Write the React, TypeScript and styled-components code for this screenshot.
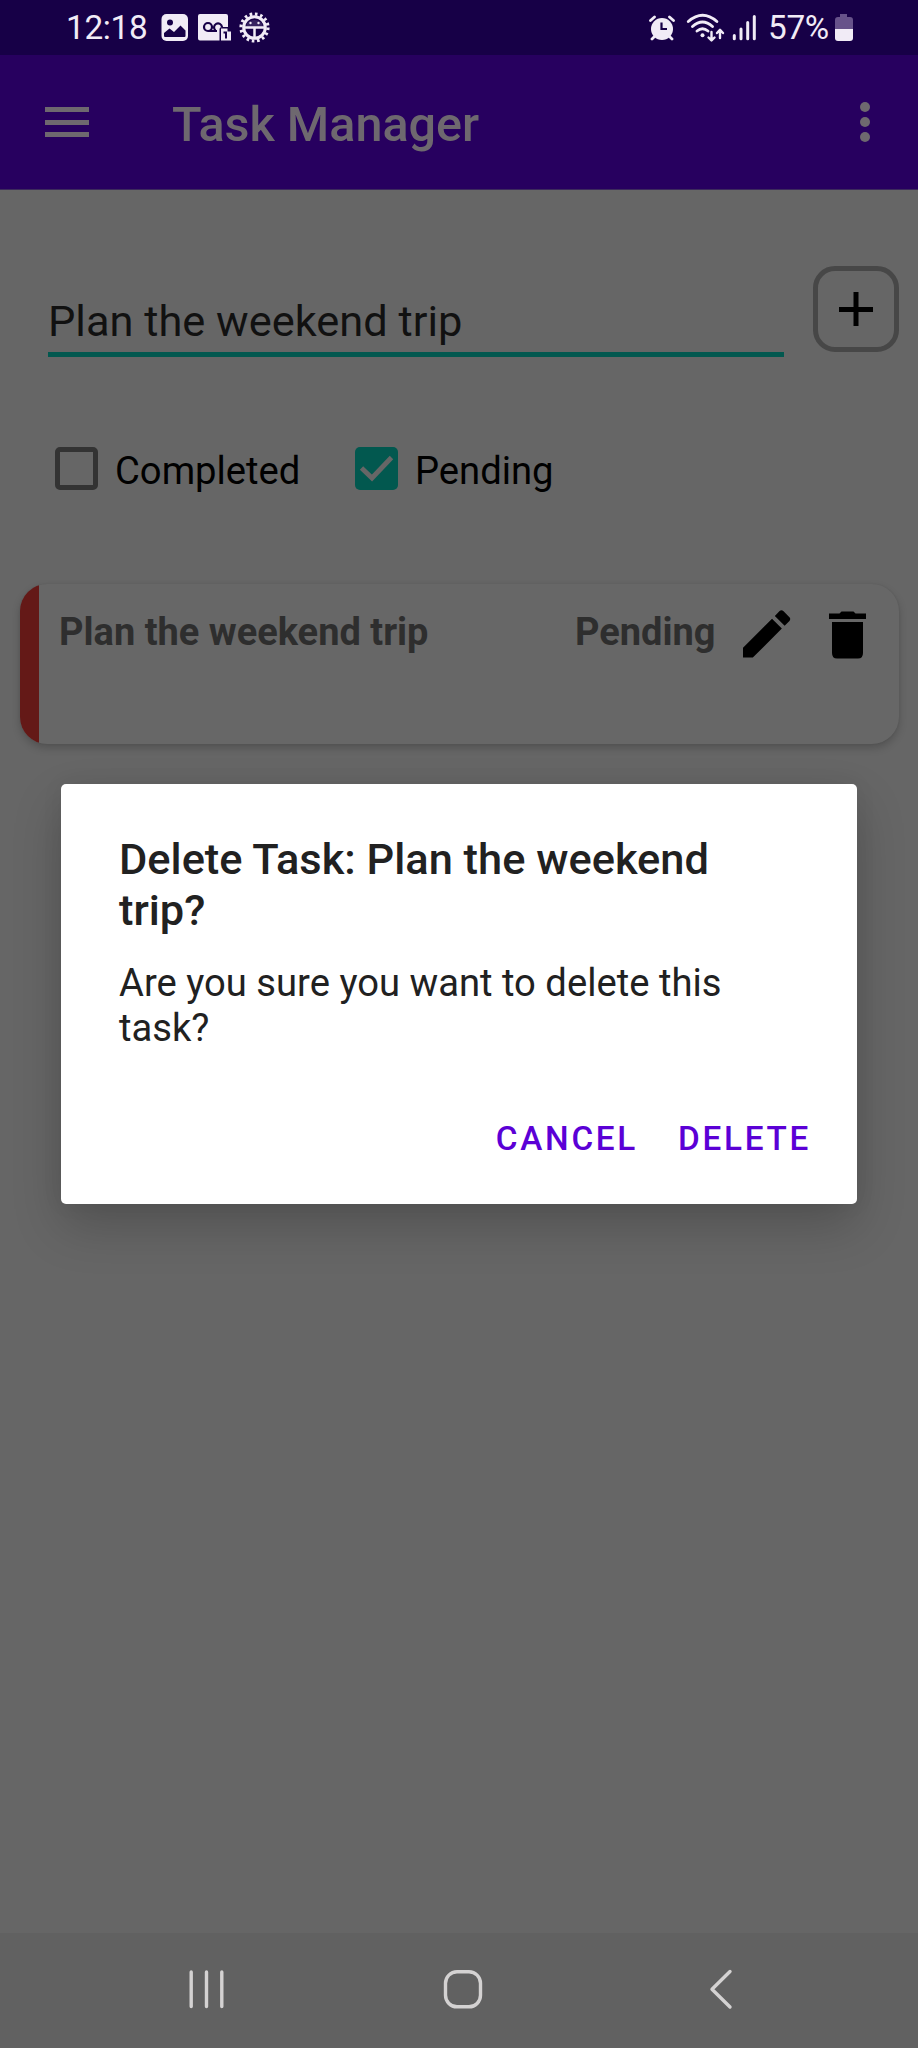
import React from "react";
import styled, { createGlobalStyle } from "styled-components";

const Global = createGlobalStyle`
  * { box-sizing: border-box; }
  body { margin: 0; background: #666; font-family: Roboto, "Liberation Sans", sans-serif; }
  button { font: inherit; color: inherit; background: none; border: 0; margin: 0; padding: 0; }
`;

const Screen = styled.div`
  position: relative;
  width: 918px;
  height: 2048px;
  overflow: hidden;
  display: flex;
  flex-direction: column;
  background: #666;
`;

const StatusBar = styled.header`
  height: 55px;
  flex: none;
  display: flex;
  justify-content: space-between;
  align-items: flex-start;
  background: #170047;
  color: #f1ebf6;
`;
const StatusGroup = styled.div<{ $start?: number; $end?: number }>`
  display: flex;
  height: 54px;
  padding-left: ${(p) => p.$start ?? 0}px;
  padding-right: ${(p) => p.$end ?? 0}px;
`;
const StatusText = styled.span<{ $width: number; $gap?: number }>`
  width: ${(p) => p.$width}px;
  margin-left: ${(p) => p.$gap ?? 0}px;
  white-space: nowrap;
  font-size: 33.3px;
  line-height: 55px;
  letter-spacing: -0.3px;
`;
const StatusIcon = styled.svg<{ $gap?: number }>`
  flex: none;
  margin-left: ${(p) => p.$gap ?? 0}px;
`;

const AppBar = styled.div`
  height: 135px;
  flex: none;
  display: flex;
  align-items: center;
  padding: 0 45px;
  background: #27005f;
  color: #6e686f;
  border-bottom: 1px solid #3c2a5c;
`;
const MenuButton = styled.button`
  width: 44px;
  height: 30px;
  display: flex;
  flex-direction: column;
  justify-content: space-between;
`;
const MenuLine = styled.span`
  height: 5px;
  width: 44px;
  background: currentColor;
`;
const AppTitle = styled.h1`
  flex: 1;
  margin: 6px 0 0 83px;
  font-size: 48.5px;
  line-height: 56px;
  font-weight: 500;
`;
const MoreButton = styled.button`
  width: 10px;
  height: 40px;
  margin-right: 3px;
  display: flex;
  flex-direction: column;
  justify-content: space-between;
`;
const Dot = styled.span`
  width: 10px;
  height: 10px;
  border-radius: 50%;
  background: currentColor;
`;

const Content = styled.main`
  flex: 1;
  display: flex;
  flex-direction: column;
`;
const EntryRow = styled.div`
  display: flex;
  align-items: flex-start;
  justify-content: space-between;
  padding: 76px 19px 0 48px;
`;
const TaskField = styled.div`
  width: 736px;
  height: 91px;
  padding-top: 26px;
  border-bottom: 5px solid #02584f;
  color: #111;
  font-size: 43.4px;
  line-height: 60px;
  white-space: nowrap;
`;
const AddButton = styled.button`
  width: 86px;
  height: 86px;
  display: flex;
  align-items: center;
  justify-content: center;
  border: 5px solid #474747;
  border-radius: 22px;
  color: #000;
`;

const Filters = styled.div`
  display: flex;
  gap: 55px;
  padding: 90px 55px 0;
`;
const Filter = styled.label<{ $width: number }>`
  display: flex;
  width: ${(p) => p.$width}px;
  height: 43px;
  gap: 17px;
  align-items: center;
  color: #000;
  font-size: 38.2px;
  line-height: 43px;
`;
const Box = styled.span<{ $checked?: boolean }>`
  width: 43px;
  height: 43px;
  flex: none;
  display: flex;
  border-radius: 5px;
  border: ${(p) => (p.$checked ? "0" : "5px solid #333")};
  background: ${(p) => (p.$checked ? "#02584f" : "transparent")};
`;
const FilterText = styled.span`
  padding-top: 5px;
`;

const TaskCard = styled.section`
  display: flex;
  width: 879px;
  height: 160px;
  margin: 94px 0 0 20px;
  border-radius: 27px;
  overflow: hidden;
  background: #676767;
  box-shadow: 0 4px 8px rgba(0, 0, 0, 0.2), 0 0 2px rgba(0, 0, 0, 0.08);
`;
const PriorityStripe = styled.span`
  width: 19px;
  background: #641917;
`;
const CardRow = styled.div`
  flex: 1;
  display: flex;
  align-items: flex-start;
  padding: 24px 33px 0 20px;
`;
const CardText = styled.span<{ $grow?: boolean; $width?: number }>`
  flex: ${(p) => (p.$grow ? "1" : "none")};
  width: ${(p) => (p.$width ? `${p.$width}px` : "auto")};
  color: #2e2e2e;
  font-size: 38px;
  line-height: 48px;
  font-weight: 700;
  white-space: nowrap;
`;
const IconButton = styled.button<{ $gap: number }>`
  display: flex;
  margin-left: ${(p) => p.$gap}px;
  color: #000;
`;

const Dialog = styled.div`
  position: absolute;
  left: 61px;
  top: 784px;
  width: 796px;
  height: 419.500px;
  display: flex;
  flex-direction: column;
  padding: 51px 46px 0 58px;
  border-radius: 5px;
  background: #fff;
  color: #212121;
  box-shadow: 0 22px 50px rgba(0, 0, 0, 0.2), 0 0 22px rgba(0, 0, 0, 0.06);
`;
const DialogTitle = styled.h2`
  margin: 0;
  max-width: 670px;
  font-size: 43.4px;
  line-height: 50.5px;
  font-weight: 500;
`;
const DialogText = styled.p`
  margin: 25px 0 0;
  font-size: 38.2px;
  line-height: 45px;
`;
const DialogActions = styled.div`
  display: flex;
  justify-content: flex-end;
  gap: 40px;
  margin-top: 68px;
`;
const DialogButton = styled.button`
  color: #5b00d6;
  font-size: 33.3px;
  line-height: 40px;
  font-weight: 500;
  letter-spacing: 2.7px;
`;

const NavBar = styled.nav`
  height: 115px;
  flex: none;
  display: flex;
  align-items: flex-start;
  padding: 31px 0 0 181px;
  background: #616161;
  color: #d4d2d2;
`;
const NavButton = styled.button<{ $gap?: number }>`
  display: flex;
  margin-left: ${(p) => p.$gap ?? 0}px;
`;

const PictureIcon = () => (
  <StatusIcon width="28" height="54" viewBox="161 0 28 54">
    <rect x="161.500" y="14" width="26.500" height="27" rx="5" fill="currentColor" />
    <circle cx="170" cy="22.500" r="3" fill="#170047" />
    <path d="M164 35.500V33l5.500-4.500 4.500 3.500 6.500-6.500 5 5V36q0 1-1 1H165q-1 0-1-1.500Z" fill="#170047" />
  </StatusIcon>
);
const VoicemailIcon = () => (
  <StatusIcon $gap={9} width="34" height="54" viewBox="198 0 34 54">
    <path d="M200 14h26q2 0 2 2v11h-6q-2.500 0-2.500 2.500v11h-19.500q-2 0-2-2V16q0-2 2-2Z" fill="currentColor" />
    <g fill="none" stroke="#170047" strokeWidth="2.200">
      <circle cx="208" cy="27" r="4" />
      <path d="M208 31h9M215.500 30.500a4 4 0 1 1 6.500-3.500" />
    </g>
    <path d="M221 28.500h6.500v3h3.500v9h-10Z" fill="currentColor" />
    <path d="M223.500 32.500h2.500v6" fill="none" stroke="#170047" strokeWidth="2" />
  </StatusIcon>
);
const GearIcon = () => (
  <StatusIcon $gap={6} width="32" height="54" viewBox="238 0 32 54">
    <g fill="none" stroke="currentColor">
      <circle cx="254.500" cy="27.500" r="13.500" strokeWidth="3.200" strokeDasharray="2.600 2.702" />
      <circle cx="254.500" cy="27.500" r="10.800" strokeWidth="3" />
      <path d="M244 27.500h21M254.500 28v11" strokeWidth="2.500" />
    </g>
    <path d="M246 27q1-7 8.500-7t8.500 7Z" fill="currentColor" opacity=".15" />
    <circle cx="250.500" cy="23" r="1.200" fill="currentColor" />
    <circle cx="258.500" cy="23" r="1.200" fill="currentColor" />
  </StatusIcon>
);
const AlarmIcon = () => (
  <StatusIcon width="26" height="54" viewBox="649 0 26 54">
    <circle cx="662" cy="29" r="11" fill="currentColor" />
    <path d="M650.500 20.500l4-3.500M673.500 20.500l-4-3.500M655 36l-3 3M669 36l3 3" fill="none" stroke="currentColor" strokeWidth="2.800" strokeLinecap="round" />
    <path d="M661.500 22.500v6.500h5.500" fill="none" stroke="#170047" strokeWidth="2.200" />
  </StatusIcon>
);
const WifiIcon = () => (
  <StatusIcon $gap={11} width="39" height="54" viewBox="686 0 39 54">
    <g fill="none" stroke="currentColor" strokeWidth="2.900" strokeLinecap="round" strokeLinejoin="round">
      <path d="M688.300 21.500q14.300-12.500 28.600 0M692.500 26.500q10-9 20 0M697 31q5.500-4.500 11 0" />
      <path d="M711.500 32v8M708.500 37.500l3 3 3-3M720 38v-8M717 33l3-3.200 3 3.200" strokeWidth="2.400" />
    </g>
    <circle cx="702.500" cy="35.200" r="2" fill="currentColor" />
  </StatusIcon>
);
const SignalIcon = () => (
  <StatusIcon $gap={7} width="24" height="54" viewBox="732 0 24 54">
    <path d="M734.300 35.500V38.700M741 29V38.700M747.700 22.500V38.700M754.300 16.500V38.700" fill="none" stroke="currentColor" strokeWidth="3" strokeLinecap="round" />
  </StatusIcon>
);
const BatteryIcon = () => (
  <StatusIcon width="19" height="54" viewBox="834 0 19 54">
    <path d="M840 14h7v3h3q3 0 3 3v9h-18v-9q0-3 3-3h2Z" fill="#67528a" />
    <path d="M835 29h18v9q0 3-3 3h-12q-3 0-3-3Z" fill="currentColor" />
  </StatusIcon>
);

const App = () => (
  <Screen>
    <Global />
    <StatusBar>
      <StatusGroup $start={66}>
        <StatusText $width={95}>12:18</StatusText>
        <PictureIcon />
        <VoicemailIcon />
        <GearIcon />
      </StatusGroup>
      <StatusGroup $end={65}>
        <AlarmIcon />
        <WifiIcon />
        <SignalIcon />
        <StatusText $gap={12} $width={66}>57%</StatusText>
        <BatteryIcon />
      </StatusGroup>
    </StatusBar>
    <AppBar>
      <MenuButton aria-label="Menu">
        <MenuLine />
        <MenuLine />
        <MenuLine />
      </MenuButton>
      <AppTitle>Task Manager</AppTitle>
      <MoreButton aria-label="More">
        <Dot />
        <Dot />
        <Dot />
      </MoreButton>
    </AppBar>
    <Content>
      <EntryRow>
        <TaskField>Plan the weekend trip</TaskField>
        <AddButton aria-label="Add">
          <svg width="34" height="34" viewBox="0 0 34 34">
            <path d="M17 0v34M0 17.500h34" stroke="currentColor" strokeWidth="5" />
          </svg>
        </AddButton>
      </EntryRow>
      <Filters>
        <Filter $width={245}>
          <Box />
          <FilterText>Completed</FilterText>
        </Filter>
        <Filter $width={220}>
          <Box $checked>
            <svg width="43" height="43" viewBox="0 0 43 43">
              <path d="M6.500 21l10.500 10L36.500 10.500" fill="none" stroke="#666" strokeWidth="4.800" />
            </svg>
          </Box>
          <FilterText>Pending</FilterText>
        </Filter>
      </Filters>
      <TaskCard>
        <PriorityStripe />
        <CardRow>
          <CardText $grow>Plan the weekend trip</CardText>
          <CardText $width={141}>Pending</CardText>
          <IconButton $gap={27} aria-label="Edit">
            <svg width="48" height="54" viewBox="3 2.100 18.300 20.588">
              <path fill="currentColor" d="M3 17.250V21h3.750L17.810 9.940l-3.750-3.750L3 17.250zM20.710 7.040c.39-.39.39-1.020 0-1.410l-2.340-2.340c-.39-.39-1.020-.39-1.410 0l-1.830 1.830 3.750 3.750 1.830-1.830z" />
            </svg>
          </IconButton>
          <IconButton $gap={38} aria-label="Delete">
            <svg width="37" height="54" viewBox="0 0 37 54">
              <path fill="currentColor" d="M10.500 5.500l2-2h12l2 2H37v5.500H0V5.500zM3 14h31v31q0 5.500-5 5.500H8q-5 0-5-5.500z" />
            </svg>
          </IconButton>
        </CardRow>
      </TaskCard>
    </Content>
    <NavBar>
      <NavButton aria-label="Recents">
        <svg width="52" height="52" viewBox="181 1964 52 52">
          <path d="M191.200 1972v34.500M206.500 1972v34.500M221.800 1972v34.500" stroke="currentColor" strokeWidth="3.400" strokeLinecap="round" />
        </svg>
      </NavButton>
      <NavButton $gap={203} aria-label="Home">
        <svg width="54" height="52" viewBox="436 1964 54 52">
          <rect x="445.500" y="1971.800" width="35" height="35" rx="11.500" fill="none" stroke="currentColor" strokeWidth="3.400" />
        </svg>
      </NavButton>
      <NavButton $gap={212} aria-label="Back">
        <svg width="38" height="52" viewBox="702 1964 38 52">
          <path d="M730 1971.500L712 1989.300l18 17.700" fill="none" stroke="currentColor" strokeWidth="3.400" strokeLinecap="round" strokeLinejoin="round" />
        </svg>
      </NavButton>
    </NavBar>
    <Dialog role="dialog">
      <DialogTitle>Delete Task: Plan the weekend trip?</DialogTitle>
      <DialogText>Are you sure you want to delete this task?</DialogText>
      <DialogActions>
        <DialogButton>CANCEL</DialogButton>
        <DialogButton>DELETE</DialogButton>
      </DialogActions>
    </Dialog>
  </Screen>
);

export default App;
